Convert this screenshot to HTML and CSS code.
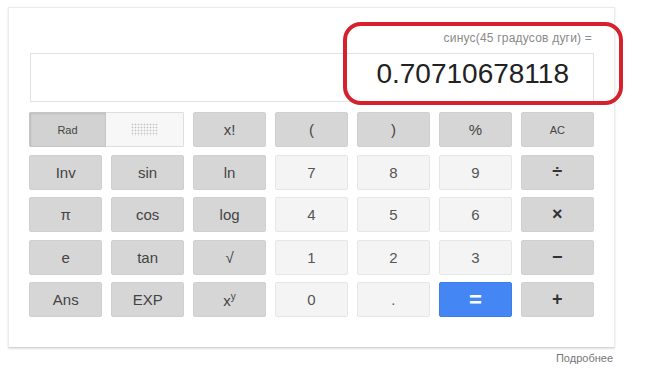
FILE: index.html
```html
<!DOCTYPE html>
<html>

<head>
    <title>Калькулятор</title>
    <link rel="stylesheet" href="styles.css">
</head>

<body>
    <div class="card">
        <div class="expr">синус(45 градусов дуги) =</div>
        <div class="display">0.70710678118</div>
        <div class="frame"></div>

        <div class="keys">
            <div class="toggle">
                <span class="rad">Rad</span>
                <span class="deg"><span class="dots"></span></span>
            </div>
            <button class="key fn">x!</button>
            <button class="key fn">(</button>
            <button class="key fn">)</button>
            <button class="key fn">%</button>
            <button class="key fn small">AC</button>

            <button class="key fn">Inv</button>
            <button class="key fn">sin</button>
            <button class="key fn">ln</button>
            <button class="key num">7</button>
            <button class="key num">8</button>
            <button class="key num">9</button>
            <button class="key fn op">÷</button>

            <button class="key fn">π</button>
            <button class="key fn">cos</button>
            <button class="key fn">log</button>
            <button class="key num">4</button>
            <button class="key num">5</button>
            <button class="key num">6</button>
            <button class="key fn op">×</button>

            <button class="key fn">e</button>
            <button class="key fn">tan</button>
            <button class="key fn">√</button>
            <button class="key num">1</button>
            <button class="key num">2</button>
            <button class="key num">3</button>
            <button class="key fn op">−</button>

            <button class="key fn">Ans</button>
            <button class="key fn">EXP</button>
            <button class="key fn">x<sup>y</sup></button>
            <button class="key num">0</button>
            <button class="key num">.</button>
            <button class="key eq">=</button>
            <button class="key fn op">+</button>
        </div>
    </div>
    <div class="more">Подробнее</div>
</body>

</html>
```

FILE: styles.css
```css
body {
    margin: 0;
    padding: 7px 0 0 8px;
    background-color: #ffffff;
    font-family: 'Liberation Sans', Arial, sans-serif;
}

.card {
    position: relative;
    box-sizing: border-box;
    width: 607px;
    height: 341px;
    padding: 23px 20px 0 21px;
    border: 1px solid #ebebeb;
    border-bottom-color: #d4d4d4;
    box-shadow: 0 1px 2px rgba(0, 0, 0, 0.12);
}

.expr {
    height: 14px;
    line-height: 14px;
    font-size: 12px;
    color: #8a8a8a;
    text-align: right;
    padding-right: 2px;
    letter-spacing: 0.2px;
}

.display {
    box-sizing: border-box;
    height: 49px;
    margin-top: 8px;
    padding: 4px 24px 0 0;
    border: 1px solid #e2e2e2;
    line-height: 32px;
    font-size: 28px;
    color: #222222;
    text-align: right;
}

/* red marker drawn over the result */
.frame {
    position: absolute;
    left: 334px;
    top: 14px;
    box-sizing: border-box;
    width: 280px;
    height: 83px;
    border: 4px solid #d6202b;
    border-radius: 18px;
}

.keys {
    display: grid;
    grid-template-columns: repeat(7, 1fr);
    grid-auto-rows: 35px;
    column-gap: 8.5px;
    row-gap: 7.5px;
    margin: 10px 0 0 -1px;
}

.key {
    box-sizing: border-box;
    margin: 0;
    padding: 0;
    border-radius: 2px;
    font-family: 'Liberation Sans', Arial, sans-serif;
    font-size: 15px;
    color: #444444;
}

.fn {
    background-color: #d6d6d6;
    border: 1px solid #cfcfcf;
}

.num {
    background-color: #f4f4f4;
    border: 1px solid #e6e6e6;
    color: #555555;
}

.small {
    font-size: 11px;
}

.op {
    font-size: 18px;
    font-weight: bold;
    color: #333333;
}

.eq {
    background-color: #4486f4;
    border: 1px solid #3d7ee8;
    color: #ffffff;
    font-size: 22px;
    font-weight: bold;
}

.key sup {
    font-size: 10px;
}

.toggle {
    grid-column: span 2;
    display: flex;
    border-radius: 2px;
    overflow: hidden;
}

.rad {
    flex: 0 0 75px;
    display: flex;
    align-items: center;
    justify-content: center;
    background-color: #d2d2d2;
    border: 1px solid #c6c6c6;
    box-shadow: inset 1px 1px 2px rgba(0, 0, 0, 0.1);
    font-size: 11px;
    color: #444444;
}

.deg {
    flex: 1;
    display: flex;
    align-items: center;
    justify-content: center;
    background-color: #f7f7f7;
    border: 1px solid #dedede;
    border-left: none;
}

.dots {
    width: 27px;
    height: 13px;
    background-image: radial-gradient(circle, #c4c4c4 0.8px, transparent 1.1px);
    background-size: 3px 3px;
}

.more {
    width: 605px;
    margin-top: 4px;
    line-height: 13px;
    font-size: 11px;
    color: #777777;
    text-align: right;
}
```
